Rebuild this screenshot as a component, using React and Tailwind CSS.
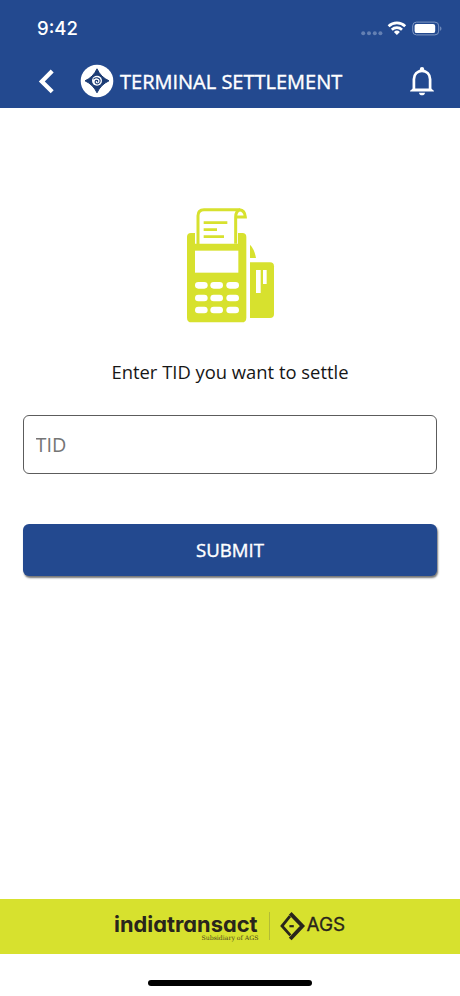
import React, { useState } from 'react';

function StatusIcons() {
  return (
    <svg width="84" height="16" viewBox="0 0 84 16" fill="none">
      <g fill="#6480b3">
        <circle cx="4.2" cy="12.2" r="2" />
        <circle cx="10" cy="12.2" r="2" />
        <circle cx="15.8" cy="12.2" r="2" />
        <circle cx="21.4" cy="12.2" r="2" />
      </g>
      <g stroke="#fff" strokeWidth="2.7">
        <path d="M29.6 5.2a12 12 0 0 1 16.6 0" />
        <path d="M32.8 8.7a7.4 7.4 0 0 1 10.2 0" />
      </g>
      <path d="M34.9 10.9a4.4 4.4 0 0 1 6 0l-3 3z" fill="#fff" />
      <rect x="53.7" y="1.1" width="26" height="12.8" rx="3.8" stroke="#7f97c2" strokeWidth="1" />
      <rect x="55.6" y="2.9" width="20.6" height="9.2" rx="2.2" fill="#fff" />
      <path d="M81.2 5.4c1.6.5 1.6 3.7 0 4.2z" fill="#7f97c2" />
    </svg>
  );
}

function BrandMark() {
  return (
    <svg width="34" height="34" viewBox="0 0 34 34">
      <circle cx="17" cy="17" r="16.3" fill="#fff" />
      <path
        d="M17 4.8Q20.8 13.2 29 16.8Q20.8 20.6 17 28.8Q13.2 20.6 5 16.8Q13.2 13.2 17 4.8z"
        fill="#1c3c74"
        stroke="#1c3c74"
        strokeWidth="1"
        strokeLinejoin="round"
      />
      <circle cx="17" cy="16.8" r="5" fill="#fff" />
      <path
        d="M13.8 14.8c1.9-1.7 5.9-1.2 6.3 1.5c.4 2.8-2.3 4.3-4.1 3.2c-1.6-1.1-.8-3.3.8-3.1c1 .1 1.2 1.1.6 1.5"
        fill="none"
        stroke="#1c3c74"
        strokeWidth="1.1"
        strokeLinecap="round"
      />
    </svg>
  );
}

function BellIcon() {
  return (
    <svg width="26" height="30" viewBox="0 0 26 30" fill="none">
      <circle cx="13" cy="3.2" r="2.2" fill="#fff" />
      <path d="M4.9 24V13.2C4.9 8.2 8.4 4.8 13 4.8s8.1 3.4 8.1 8.4V24" stroke="#fff" strokeWidth="2.7" />
      <path d="M1 25.4c0-1.1 1.8-1.4 2.9-2.8h18.2c1.1 1.4 2.9 1.7 2.9 2.8z" fill="#fff" />
      <path d="M10 26.8h6c0 3.4-6 3.4-6 0z" fill="#fff" />
    </svg>
  );
}

const KEY_ROWS = [261, 299, 335];
const KEY_COLS = [60, 106, 154];

function TerminalIcon() {
  return (
    <svg width="90" height="117" viewBox="33 36 270 351" fill="none" className="ml-[2px]">
      {/* handset body */}
      <path d="M48 114h12v32h129v-32h13q12 0 12 12v242q0 14-14 14H50q-14 0-14-14V126q0-12 12-12z" fill="#d7e12e" />
      <rect x="60" y="167" width="130" height="66" fill="#fff" />
      {KEY_ROWS.map((y) =>
        KEY_COLS.map((x) => <rect key={`${x}-${y}`} x={x} y={y} width="38" height="20" rx="10" fill="#fff" />)
      )}
      {/* receipt */}
      <path d="M69 148V62q0-18 18-18h106q17 2 18 22h-28" stroke="#d7e12e" strokeWidth="9" />
      <path d="M196 44q-14 4-14 22v80" stroke="#d7e12e" strokeWidth="9" />
      <path d="M86 83h71M86 104h40M86 125h61" stroke="#d7e12e" strokeWidth="8" />
      {/* card */}
      <path d="M225 149q13 13 18 40h-18z" fill="#d7e12e" />
      <path d="M225 202h60q12 0 12 12v142q0 13-12 13h-60z" fill="#d7e12e" />
      <path d="M243 225h14v69h-14zM264 225h11v42h-11z" fill="#fff" />
    </svg>
  );
}

function FooterLogo() {
  return (
    <svg width="234" height="36" viewBox="0 0 234 36" className="font-['Inter','Liberation_Sans',sans-serif]">
      <text
        x="1"
        y="24"
        fontSize="22"
        fontWeight="700"
        textLength="143.5"
        lengthAdjust="spacingAndGlyphs"
        fill="#29251c"
        className="[font-feature-settings:'cv11']"
      >
        indiatransact
      </text>
      <text
        x="88.5"
        y="32"
        fontSize="6.2"
        textLength="57"
        lengthAdjust="spacingAndGlyphs"
        fill="#4c4a20"
        className="font-['DejaVu_Serif',serif]"
      >
        Subsidiary of AGS
      </text>
      <path d="M156.5 4v28" stroke="#b3bc35" strokeWidth="1" />
      <g fill="none" stroke="#29251c">
        <path d="M177.2 5.4L189.4 18L177.2 31" strokeWidth="3.8" />
        <path d="M177 8.2L169 18L177.4 27.4" strokeWidth="2.8" />
        <path d="M176.4 18.2h4.4" strokeWidth="2.2" />
      </g>
      <text x="193.6" y="23.2" fontSize="18.6" fontWeight="400" textLength="38.6" lengthAdjust="spacingAndGlyphs" fill="#29251c" stroke="#29251c" strokeWidth="0.3">
        AGS
      </text>
    </svg>
  );
}

function App() {
  const [tid, setTid] = useState('');

  return (
    <div className="flex h-[996px] w-[460px] flex-col bg-white font-['Open_Sans','Noto_Sans',sans-serif]">
      <header className="h-[108px] bg-[#23498f] text-white">
        <div className="flex h-[54px] items-center justify-between pt-1 pr-[17px] pl-[37px]">
          <span className="font-['Inter',sans-serif] text-[18.5px] font-medium">9:42</span>
          <StatusIcons />
        </div>
        <div className="flex h-[54px] items-center pr-[25px] pl-[38px]">
          <button type="button" aria-label="Back">
            <svg width="17" height="26" viewBox="0 0 17 26" fill="none" stroke="#fff" strokeWidth="4.2">
              <path d="M14.2 3L3.8 13.4L14.2 23.8" />
            </svg>
          </button>
          <span className="ml-[25px]">
            <BrandMark />
          </span>
          <h1 className="ml-[6px] pt-px text-[20px] whitespace-nowrap [-webkit-text-stroke:0.4px_white]">TERMINAL SETTLEMENT</h1>
          <button type="button" className="ml-auto" aria-label="Notifications">
            <BellIcon />
          </button>
        </div>
      </header>

      <main className="flex flex-1 flex-col items-center px-[23px] pt-[99px]">
        <TerminalIcon />
        <p className="mt-[34px] text-[18.4px] leading-7 whitespace-nowrap text-[#161616]">Enter TID you want to settle</p>
        <input
          type="text"
          value={tid}
          onChange={(e) => setTid(e.target.value)}
          placeholder="TID"
          className="mt-[29px] h-[59px] w-full rounded-md border border-[#5c5c5c] px-[11.5px] text-[19.8px] placeholder:text-[#757575]"
        />
        <button
          type="button"
          className="mt-[50px] h-[52px] w-full rounded-md bg-[#23498f] text-[18.6px] text-white shadow-[1px_2px_2px_rgba(0,0,0,0.55)] [-webkit-text-stroke:0.4px_white]"
        >
          SUBMIT
        </button>
      </main>

      <footer>
        <div className="flex h-[55px] justify-center bg-[#d7e12e] pt-[9px]">
          <FooterLogo />
        </div>
        <div className="flex h-[42px] justify-center pt-[26px]">
          <div className="h-[6px] w-[164px] rounded-full bg-black" />
        </div>
      </footer>
    </div>
  );
}

export default App;
